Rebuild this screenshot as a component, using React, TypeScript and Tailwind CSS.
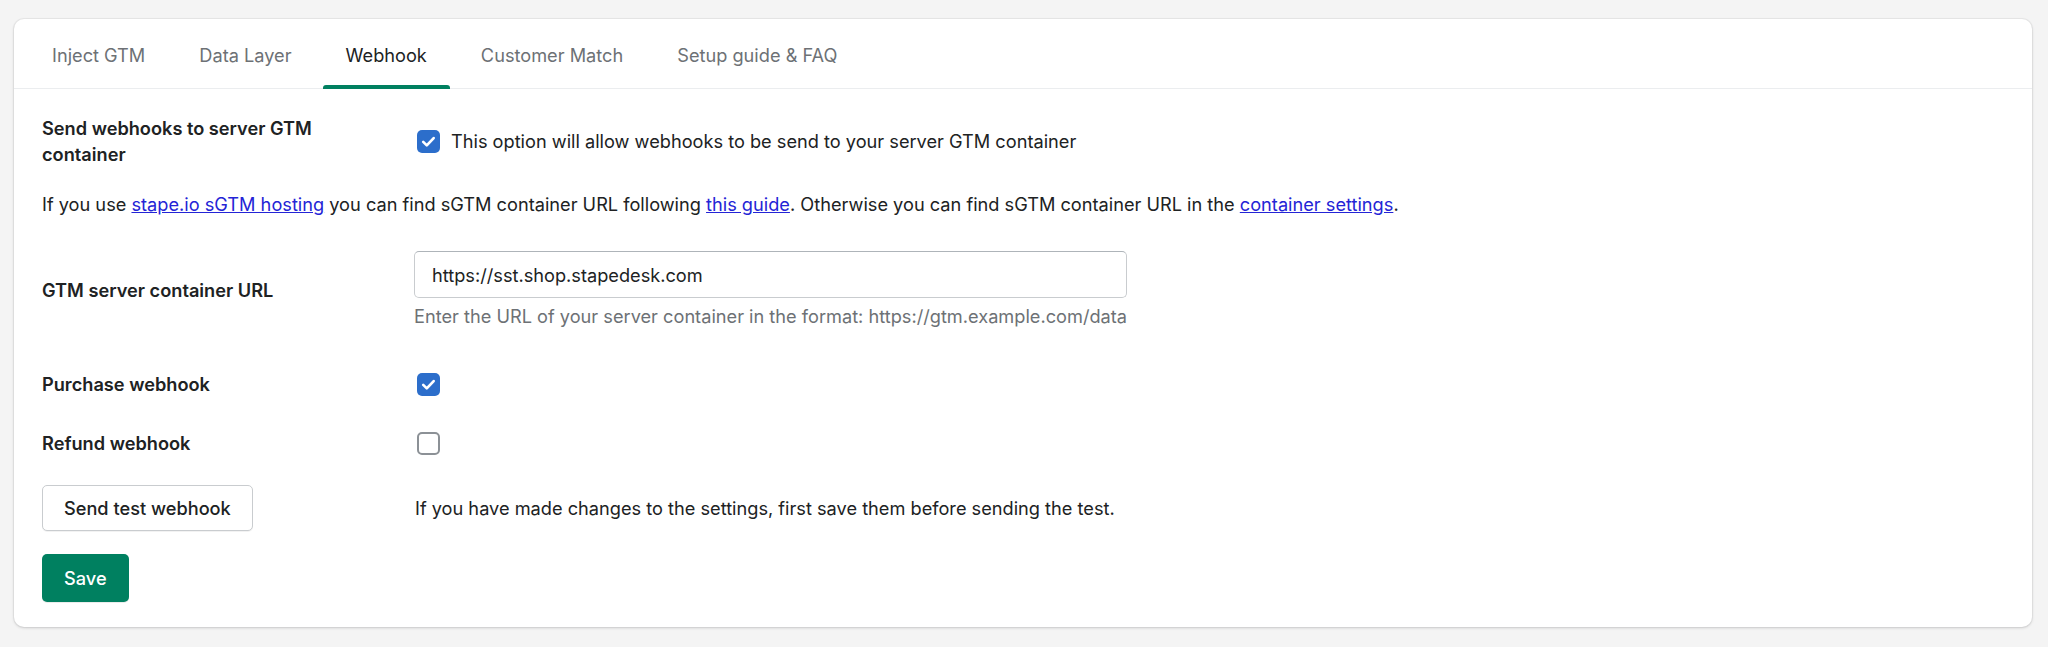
import { useState } from "react";

const tabs = ["Inject GTM", "Data Layer", "Webhook", "Customer Match", "Setup guide & FAQ"];

function Checkbox({ checked }: { checked: boolean }) {
  return checked ? (
    <span className="ml-[3px] flex h-[23px] w-[23px] shrink-0 items-center justify-center rounded-[5px] bg-[#2c6ecb]">
      <svg viewBox="0 0 20 20" className="h-[23px] w-[23px]" fill="none" stroke="white" strokeWidth="2.3" strokeLinecap="round" strokeLinejoin="round">
        <path d="M5.4 10.3l3.1 3.1 6-6.4" />
      </svg>
    </span>
  ) : (
    <span className="ml-[3px] block h-[23px] w-[23px] shrink-0 rounded-[5px] border-2 border-[#8c9196] bg-white" />
  );
}

export default function App() {
  const [active, setActive] = useState("Webhook");

  return (
    <div className="min-h-screen bg-[#f4f4f4] pt-[19px] pb-[21px] pl-[14px] pr-[16px] text-[18.2px] leading-[26px] text-[#202223] [font-family:Inter,'Noto_Sans',sans-serif]">
      <div className="rounded-[10px] bg-white shadow-[0_0_0_1px_rgba(63,63,68,0.05),0_1px_3px_0_rgba(63,63,68,0.2)]">
        <div className="flex h-[70px] gap-[8px] border-b border-[#ebedef] pl-[15px]">
          {tabs.map((t) => (
            <button
              key={t}
              onClick={() => setActive(t)}
              className={`relative h-full px-[23px] pt-[3px] ${t === active ? "text-[#202223]" : "text-[#6d7175]"}`}
            >
              {t}
              {t === active && <span className="absolute bottom-[-1px] left-0 right-0 h-[4px] rounded-t-[3px] bg-[#008060]" />}
            </button>
          ))}
        </div>

        <div className="px-[28px] pt-[26px] pb-[25px]">
          <div className="flex items-center">
            <div className="w-[372px] shrink-0 pr-[70px] font-semibold">Send webhooks to server GTM container</div>
            <label className="flex items-center gap-[11px]">
              <Checkbox checked />
              <span>This option will allow webhooks to be send to your server GTM container</span>
            </label>
          </div>

          <p className="mt-[24px]">
            If you use <a href="#" className="text-[#2424d6] underline">stape.io sGTM hosting</a> you can find sGTM container URL following{" "}
            <a href="#" className="text-[#2424d6] underline">this guide</a>. Otherwise you can find sGTM container URL in the{" "}
            <a href="#" className="text-[#2424d6] underline">container settings</a>.
          </p>

          <div className="mt-[34px] flex items-center">
            <div className="w-[372px] shrink-0 font-semibold">GTM server container URL</div>
            <div className="w-[713px]">
              <div className="flex h-[47px] items-center rounded-[5px] border border-[#c9cccf] border-t-[#aeb4b9] px-[17px]">
                https://sst.shop.stapedesk.com
              </div>
              <div className="mt-[5px] whitespace-nowrap text-[#6d7175]">
                Enter the URL of your server container in the format: https://gtm.example.com/data
              </div>
            </div>
          </div>

          <div className="mt-[42px] flex items-center">
            <div className="w-[372px] shrink-0 font-semibold">Purchase webhook</div>
            <Checkbox checked />
          </div>

          <div className="mt-[33px] flex items-center">
            <div className="w-[372px] shrink-0 font-semibold">Refund webhook</div>
            <Checkbox checked={false} />
          </div>

          <div className="mt-[29px] flex items-center">
            <div className="w-[373px] shrink-0">
              <button className="h-[46px] rounded-[5px] border border-[#c9cccf] bg-white px-[21px] font-medium shadow-[0_1px_0_rgba(0,0,0,0.05)]">
                Send test webhook
              </button>
            </div>
            <span>If you have made changes to the settings, first save them before sending the test.</span>
          </div>

          <button className="mt-[23px] h-[48px] rounded-[5px] bg-[#008060] px-[22px] font-medium text-white shadow-[0_1px_0_rgba(0,0,0,0.08)]">
            Save
          </button>
        </div>
      </div>
    </div>
  );
}
